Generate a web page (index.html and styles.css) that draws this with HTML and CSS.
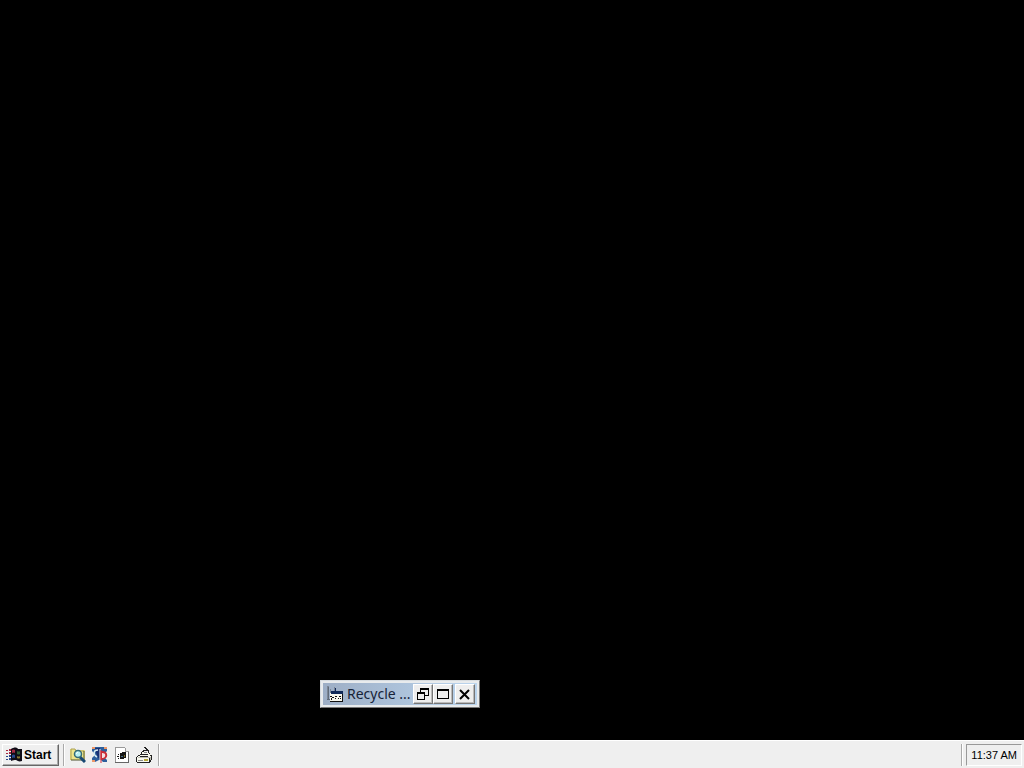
FILE: index.html
```html
<!DOCTYPE html>
<html lang="en">
<head>
<meta charset="utf-8">
<title>Desktop</title>
<link rel="stylesheet" href="styles.css">
</head>
<body>
<main class="desktop">
  <section class="window" aria-label="Recycle Bin">
    <header class="titlebar">
      <svg class="icon" viewBox="0 0 16 16" shape-rendering="crispEdges">
        <path fill="#7d8796" d="M0 0h2v13H0zM3 3h1v7H3zM7 1h1v5H7z"/>
        <path fill="#606b79" d="M1 1h1v12H1zM5 6h1v4H5zM0 13h5v1H0z"/>
        <path fill="#f8f7ed" d="M3 7h13v8H3z"/>
        <path fill="#122b59" d="M4 5h12v3H4zM8 2h1v3H8z"/>
        <path fill="#111" d="M3 10h2v1H3zM5 11h2v1H5zM4 12h1v2H4zM8 10h2v1H8zM8 12h1v1H8zM12 10h2v1h-2zM11 12h1v1h-1zM13 12h1v1h-1zM15 8h1v8h-1zM3 15h13v1H3z"/>
      </svg>
      <span class="title">Recycle ...</span>
      <div class="controls">
        <button class="control" aria-label="Restore"><svg viewBox="0 0 14 14" shape-rendering="crispEdges"><path d="M4 1h9v8H9v4H1V5h3zm1 2v2h4v3h3V3zM2 7v5h6V7z" fill-rule="evenodd"/></svg></button>
        <button class="control" aria-label="Maximize"><svg viewBox="0 0 14 14" shape-rendering="crispEdges"><path d="M1 2h12v10H1zm1 2v7h10V4z" fill-rule="evenodd"/></svg></button>
        <button class="control close" aria-label="Close"><svg viewBox="0 0 14 14"><path d="m2 3 9 9M11 3 2 12" stroke="#000" stroke-width="2"/></svg></button>
      </div>
    </header>
  </section>
</main>
<footer class="taskbar">
  <button class="start">
    <svg class="icon" viewBox="0 0 16 16">
      <path fill="#100c16" d="M5 2C8 0 11 0 12 2h4v12c-3 1-4 0-6-1-2 0-3 0-5 1z"/>
      <path fill="#a62a43" d="M0 3h2v1H0zM3 2h2v2H3zM0 6h2v1H0zM3 5h2v2H3zM6 3q2-1 3 0v3Q8 5 6 6z"/>
      <path fill="#29488d" d="M0 9h2v1H0zM3 8h2v2H3zM0 12h2v1H0zM3 11h2v2H3zM6 8q2-1 3 0v3q-1-1-3 0z"/>
      <path fill="#305f37" d="M11 4q2 1 3 0v3q-1 1-3 0z"/>
      <path fill="#8a7731" d="M11 9q2 1 3 0v2q-1 1-3 0z"/>
    </svg>
    <span>Start</span>
  </button>
  <nav class="quick" aria-label="Quick launch">
    <button aria-label="Find files"><svg class="icon" viewBox="0 0 16 16">
      <path fill="#eee58a" d="M0 2h5l1 1h9v10H0z"/>
      <path fill="none" stroke="#aaa055" d="M1 13V2h4l1 2h8"/>
      <path fill="none" stroke="#4d512f" d="M1 13h13V4"/>
      <path stroke="#174873" stroke-width="3" d="m10 10 5 5"/>
      <circle cx="8" cy="7" r="3.5" fill="#b7f0f1" stroke="#356b76" stroke-width="1.5"/>
      <path fill="none" stroke="#efffff" d="m6 7 2-2"/>
    </svg></button>
    <button aria-label="Desktop utility"><svg class="icon" viewBox="0 0 16 16">
      <path fill="#2c5e9c" d="M0 0h15v4l-2 2v5l2 2v2h-4l-2-2H7l-4 2H0v-4l2-2V6L0 4z"/>
      <path fill="#ec9869" d="M0 0h3v2H0zM0 13h3v2H0zM12 0h3v2h-3z"/>
      <path fill="#173174" d="M3 1h5v12C5 10 4 6 3 1z"/>
      <path fill="none" stroke="#d8edf2" stroke-width="1.5" d="M6 3C1 3 1 8 5 10"/>
      <path fill="#f3e1e3" stroke="#c92d38" stroke-width="2" d="M9 5c7-1 7 7 0 7z"/>
      <path stroke="#f9eeee" stroke-width="1" d="M8 2v13"/>
      <path stroke="#cf303c" stroke-width="1" d="M9 3v13"/>
    </svg></button>
    <button aria-label="Windows document"><svg class="icon" viewBox="0 0 16 16" shape-rendering="crispEdges">
      <path fill="#fff" d="M1 0h10v4h4v12H1z"/>
      <path fill="#999" d="M1 0h10v1H2v14H1zM11 1h1v3h3v1h-4z"/>
      <path fill="#666" d="M14 5h1v11H1v-1h13z"/>
      <path fill="#151515" d="M6 6h2V5h4v6h-2v1H6zM4 7h1v1H4zM3 9h2v1H3zM4 11h1v1H4z"/>
      <path fill="#426c89" d="M7 9h2v1H7z"/><path fill="#82732a" d="M10 8h1v2h-1z"/>
    </svg></button>
    <button aria-label="Disk drive"><svg class="icon" viewBox="0 0 16 16" shape-rendering="crispEdges">
      <path fill="#f8f8ef" d="m3 7 3-2h6l4 3v4l-3 3H0v-5z"/>
      <path fill="#bfbfb4" d="M13 10h2v3l-2 2zM2 10h11v1H2z"/>
      <path fill="#222" d="M2 8h2v1H2zM1 9h1v1H1zM0 10h1v5H0zM1 15h13v1H1zM13 11h1v4h-1zM14 8h2v1h-2zM15 9h1v4h-1zM14 13h1v2h-1zM4 9h8v1H4z"/>
      <path fill="#222" d="M8 0h2v1H8zM9 1h2v1H9zM10 2h2v1h-2zM7 3h6v1H7zM6 4h2v1H6zM5 5h1v2H5zM4 7h8v1H4zM12 4h1v2h-1zM13 6h1v1h-1z"/>
      <path fill="#888" d="M8 5h3v1H8zM2 13h5v1H2z"/>
      <path fill="#b5a637" d="M8 12h4v2H8z"/>
    </svg></button>
  </nav>
  <div class="tray"><time class="clock" datetime="11:37">11:37 AM</time></div>
</footer>
</body>
</html>
```
FILE: styles.css
```css
* { box-sizing: border-box; }

body {
  margin: 0;
  min-height: 100vh;
  display: flex;
  flex-direction: column;
  background: #000;
  color: #000;
  font-family: "Liberation Sans", Arial, sans-serif;
}

button {
  padding: 0;
  border: 0;
  color: inherit;
  font: inherit;
}

.icon {
  width: 16px;
  height: 16px;
  flex: none;
  display: block;
}

.desktop {
  position: relative;
  flex: 1;
}

.window {
  position: absolute;
  left: 320px;
  bottom: 32px;
  width: 160px;
  padding: 2px;
  border: 1px solid;
  border-color: #d7dce0 #777 #777 #d7dce0;
  background: #e8ebed;
}

.titlebar {
  height: 22px;
  padding: 0 2px 0 4px;
  display: flex;
  align-items: center;
  gap: 4px;
  background: linear-gradient(90deg, #9daec5, #bbd5ee);
}

.title {
  flex: 1;
  min-width: 0;
  color: #172338;
  font-family: "Noto Sans", sans-serif;
  font-size: 14px;
  line-height: 20px;
  white-space: nowrap;
}

.controls { display: flex; }

.control {
  width: 20px;
  height: 20px;
  display: grid;
  place-items: center;
  background: #eee;
  border: 1px solid;
  border-color: #fff #777 #777 #fff;
  box-shadow: inset -1px -1px #bbb;
}

.control svg {
  width: 14px;
  height: 14px;
}

.close { margin-left: 2px; }

.taskbar {
  height: 28px;
  padding: 3px 2px 2px;
  display: flex;
  align-items: stretch;
  background: #efefef;
  border-top: 1px solid #fff;
}

.start {
  width: 57px;
  padding: 0 3px;
  display: flex;
  align-items: center;
  gap: 2px;
  background: #efefef;
  border: 1px solid;
  border-color: #fff #666 #666 #fff;
  box-shadow: inset -1px -1px #aaa;
  font-size: 12px;
  font-weight: bold;
}

.quick {
  margin-left: 4px;
  padding: 0 6px;
  display: flex;
  align-items: center;
  gap: 6px;
  border-left: 1px solid #aaa;
  border-right: 1px solid #aaa;
  box-shadow: inset 1px 0 #fff, 1px 0 #fff;
}

.quick button { background: transparent; }

.tray {
  margin-left: auto;
  padding-left: 4px;
  display: flex;
  border-left: 1px solid #aaa;
  box-shadow: inset 1px 0 #fff;
}

.clock {
  padding: 0 4px;
  display: flex;
  align-items: center;
  border: 1px solid;
  border-color: #999 #fff #fff #999;
  font-size: 11px;
  white-space: nowrap;
}
```
